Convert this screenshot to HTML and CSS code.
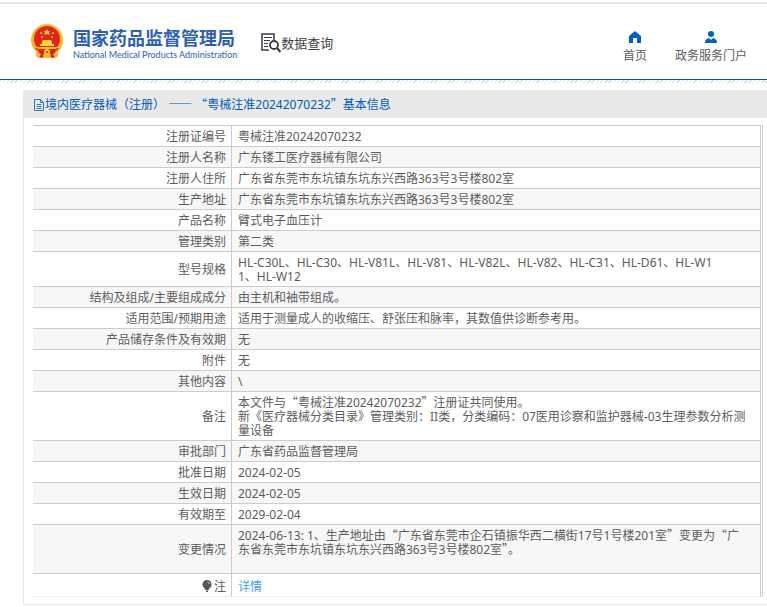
FILE: index.html
```
<!DOCTYPE html>
<html lang="zh-CN">
<head>
	<meta charset="UTF-8">
	<title>数据查询</title>
	<link rel="stylesheet" href="styles.css">
</head>
<body>
	<header class="header">
		<div class="brand">
			<svg class="emblem" viewBox="0 0 32 35">
				<circle cx="16" cy="16" r="16" fill="#efb92c"/>
				<path d="M4 24l4 4-2 5 5 1 5-3 5 3 5-1-2-5 4-4z" fill="#d8261c"/>
				<path d="M5 28l5 2-2 4-3-2zM27 28l-5 2 2 4 3-2zM12 30h8l-1 4h-6z" fill="#efb92c"/>
				<circle cx="16" cy="15" r="13" fill="#e3241b"/>
				<path d="M16 5l1 2h2l-1 2 1 2-3-1-3 1 1-2-1-2h2z" fill="#fbd33a"/>
				<circle cx="10" cy="9" r="1" fill="#fbd33a"/>
				<circle cx="11" cy="13" r="1" fill="#fbd33a"/>
				<circle cx="21" cy="13" r="1" fill="#fbd33a"/>
				<circle cx="22" cy="9" r="1" fill="#fbd33a"/>
				<path d="M11 18l1-2h8l1 2v2h2v2H9v-2h2z" fill="#fbd33a"/>
				<path d="M5 23h22l-2 2H7z" fill="#f6c22f"/>
				<circle cx="16" cy="28" r="3" fill="#f6c22f"/>
				<circle cx="16" cy="28" r="1" fill="#e3241b"/>
			</svg>
			<div class="brand_name">
				<div class="brand_cn">国家药品监督管理局</div>
				<div class="brand_en">National Medical Products Administration</div>
			</div>
		</div>
		<div class="section">
			<svg class="section_icon" viewBox="0 0 20 20" fill="none" stroke="#3b3b4d">
				<path d="M8 17H1V1h12v6" stroke-width="1.5"/>
				<path d="M3 4.5h8M3 7.5h6M3 10.5h4M3 13.5h4" stroke-width="1.2"/>
				<circle cx="13" cy="12" r="4" stroke-width="1.8"/>
				<path d="M16 15l3.500 4" stroke-width="2.200"/>
			</svg>
			<span>数据查询</span>
		</div>
		<nav class="nav">
			<a class="nav_item" href="#">
				<svg class="nav_icon" viewBox="0 0 12 12"><path d="M6 0l6 5v7H8V7H4v5H0V5z" fill="#0061c4"/></svg>
				首页
			</a>
			<a class="nav_item" href="#">
				<svg class="nav_icon" viewBox="0 0 12 12" fill="#0061c4"><circle cx="6" cy="3" r="3"/><path d="M0 12c0-3 1-4 4-5l2 2 2-2c3 1 4 2 4 5z"/></svg>
				政务服务门户
			</a>
		</nav>
	</header>

	<main class="main">
		<h1 class="title">
			<svg class="title_icon" viewBox="0 0 10 12" fill="none" stroke="#0059bd" stroke-width=".8"><path d="M.5.500h6l3 3v8h-9zM6.500.500v3h3M2.500 5.500h5M2.500 7.500h5M2.500 9.500h5"/></svg>
			<span>境内医疗器械（注册） <span class="zh">——</span> <span class="zh">“</span>粤械注准20242070232<span class="zh">”</span>基本信息</span>
		</h1>
		<div class="panel">
			<div class="table_box">
				<table class="info">
					<tr><th>注册证编号</th><td>粤械注准20242070232</td></tr>
					<tr><th>注册人名称</th><td>广东镂工医疗器械有限公司</td></tr>
					<tr><th>注册人住所</th><td>广东省东莞市东坑镇东坑东兴西路363号3号楼802室</td></tr>
					<tr><th>生产地址</th><td>广东省东莞市东坑镇东坑东兴西路363号3号楼802室</td></tr>
					<tr><th>产品名称</th><td>臂式电子血压计</td></tr>
					<tr><th>管理类别</th><td>第二类</td></tr>
					<tr><th>型号规格</th><td>HL-C30L、HL-C30、HL-V81L、HL-V81、HL-V82L、HL-V82、HL-C31、HL-D61、HL-W1<br>1、HL-W12</td></tr>
					<tr><th>结构及组成/主要组成成分</th><td>由主机和袖带组成。</td></tr>
					<tr><th>适用范围/预期用途</th><td>适用于测量成人的收缩压、舒张压和脉率，其数值供诊断参考用。</td></tr>
					<tr><th>产品储存条件及有效期</th><td>无</td></tr>
					<tr><th>附件</th><td>无</td></tr>
					<tr><th>其他内容</th><td>\</td></tr>
					<tr><th>备注</th><td>本文件与<span class="zh">“</span>粤械注准20242070232<span class="zh">”</span>注册证共同使用。<br>新《医疗器械分类目录》管理类别：II类，分类编码：07医用诊察和监护器械-03生理参数分析测量设备</td></tr>
					<tr><th>审批部门</th><td>广东省药品监督管理局</td></tr>
					<tr><th>批准日期</th><td>2024-02-05</td></tr>
					<tr><th>生效日期</th><td>2024-02-05</td></tr>
					<tr><th>有效期至</th><td>2029-02-04</td></tr>
					<tr><th>变更情况</th><td>2024-06-13: 1、生产地址由<span class="zh">“</span>广东省东莞市企石镇振华西二横街17号1号楼201室<span class="zh">”</span>变更为<span class="zh">“</span>广东省东莞市东坑镇东坑东兴西路363号3号楼802室<span class="zh">”</span>。<br><br></td></tr>
					<tr class="note">
						<th><svg class="note_icon" viewBox="0 0 10 12"><path d="M5 0a4.500 4.500 0 0 1 2.500 8.200L6.500 10h-3l-1-1.800A4.500 4.500 0 0 1 5 0zM4 10.500h2V12H4z" fill="#555"/><path d="M5.500 2a2.500 2.500 0 0 1 2 2" fill="none" stroke="#fff" stroke-width=".8"/></svg>注</th>
						<td><a href="#">详情</a></td>
					</tr>
				</table>
			</div>
		</div>
	</main>
</body>
</html>
```
FILE: styles.css
```
*{
	box-sizing:border-box;
	margin:0;
	padding:0;
}

body{
	padding-top:2px;
	background-color:#fff;
	color:#5c5c5c;
	font:12px/14px "Noto Sans","Noto Sans CJK SC",sans-serif;
}

a{
	text-decoration:none;
}

svg{
	display:block;
	flex:none;
}

/* 中文引号、破折号占全角 */
.zh{
	font-family:"Noto Sans CJK SC",sans-serif;
	line-height:0;
}

.header{
	display:flex;
	align-items:center;
	height:78px;
	padding:0 20px 0 31px;
	border-top:2px solid #e4e4e4;
	border-bottom:1px solid #0059b2;
}

.brand{
	display:flex;
	align-items:center;
	gap:10px;
}

.emblem{
	width:32px;
	height:35px;
}

.brand_name{
	padding-top:4px;
	color:#2d60b0;
	white-space:nowrap;
}

.brand_cn{
	font-size:18px;
	line-height:22px;
	font-weight:bold;
}

.brand_en{
	font-family:Lato,sans-serif;
	font-size:9px;
	line-height:12px;
}

.section{
	display:flex;
	align-items:center;
	margin-left:24px;
	padding-top:2px;
	color:#3f3f46;
	font-size:13px;
	white-space:nowrap;
}

.section_icon{
	width:20px;
	height:20px;
}

.nav{
	display:flex;
	gap:28px;
	margin-left:auto;
}

.nav_item{
	display:flex;
	flex-direction:column;
	align-items:center;
	gap:6px;
	padding-top:10px;
	color:#5c5c5c;
	white-space:nowrap;
}

.nav_icon{
	width:12px;
	height:12px;
}

.main{
	padding:0 0 2px 23px;
	background:repeating-linear-gradient(135deg,#ddd 0,#ddd 1px,#fff 1px,#fff 3px) top/100% 3px no-repeat;
}

.main:before{
	content:"";
	display:block;
	height:10px;
}

.title{
	display:flex;
	align-items:center;
	height:28px;
	padding:2px 0 0 11px;
	background-color:#e9e9e9;
	color:#0059bd;
	font-size:12px;
	font-weight:normal;
}

.title_icon{
	width:10px;
	height:12px;
	margin-right:1px;
}

.panel{
	padding:7px 4px 7px 9px;
	border-left:1px solid #e6e6e6;
	border-bottom:1px solid #e6e6e6;
}

.table_box{
	padding-right:1px;
	border-right:1px solid #ccc;
}

.info{
	width:100%;
	border-collapse:separate;
	border-spacing:0;
	border-top:1px solid #ccc;
	border-right:1px solid #ccc;
}

.info th,.info td{
	padding:4px 12px 2px 6px;
	border-bottom:1px solid #ccc;
	word-break:break-all;
}

.info th{
	width:199px;
	padding-right:5px;
	border-right:1px solid #ccc;
	font-weight:normal;
	text-align:right;
}

.info tr:nth-child(even){
	background-color:#f7f7f7;
}

.info .note th,.info .note td{
	padding-top:6px;
	padding-bottom:2px;
	border-bottom-color:#ebeef5;
}

.note_icon{
	display:inline-block;
	width:10px;
	height:12px;
	margin-right:2px;
	vertical-align:-1px;
}

.note a{
	color:#409eff;
}
```
